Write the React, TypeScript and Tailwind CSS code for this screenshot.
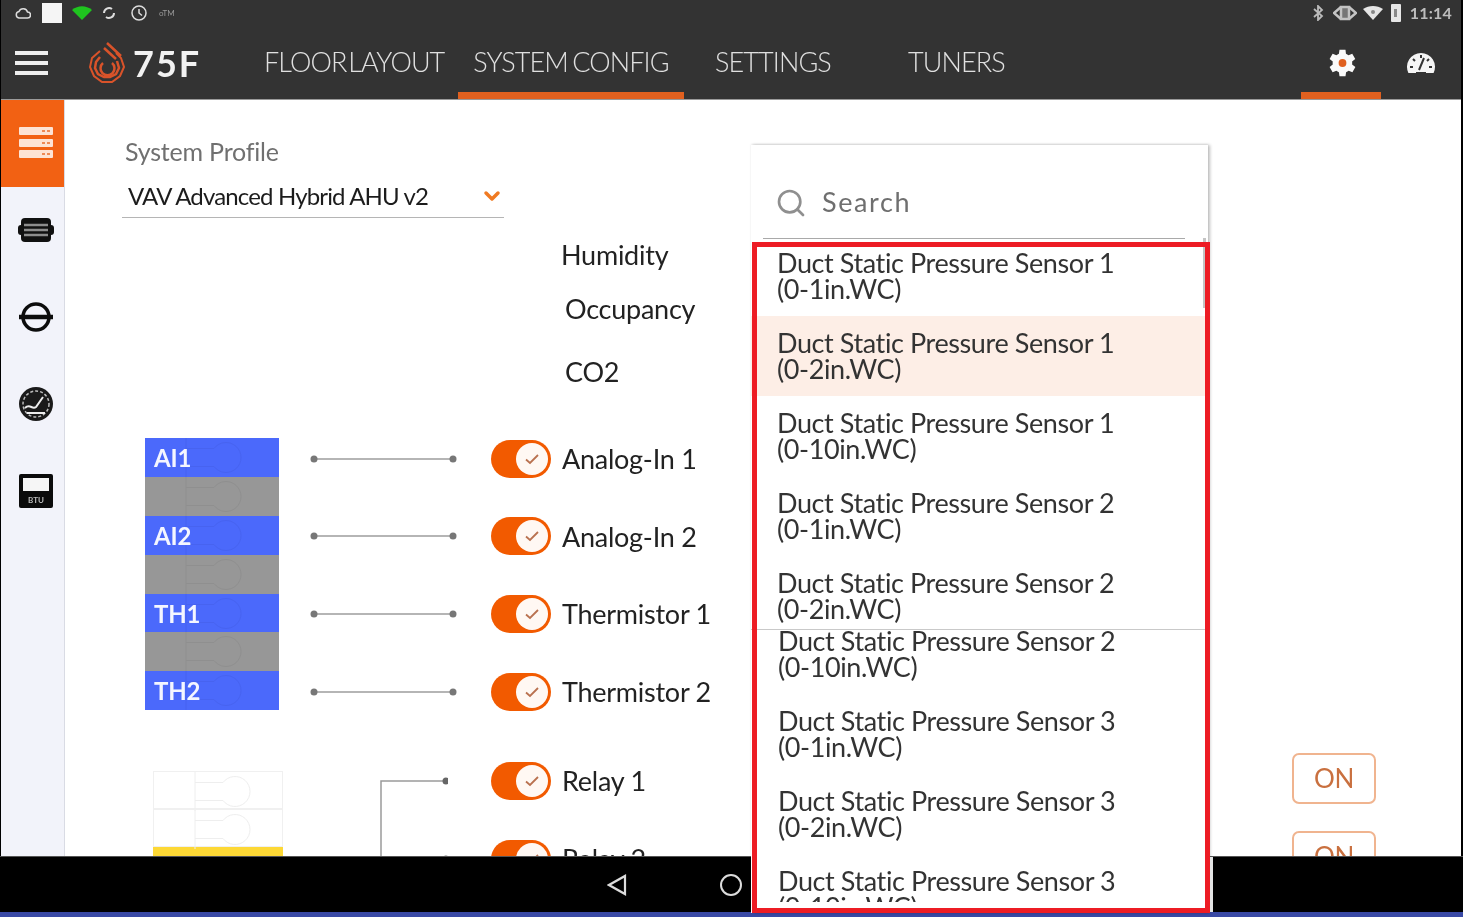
import type { ReactNode } from "react";
import { ChevronDown, Search } from "lucide-react";

const topSensors = [
  ["Duct Static Pressure Sensor 1", "(0-1in.WC)"],
  ["Duct Static Pressure Sensor 1", "(0-2in.WC)"],
  ["Duct Static Pressure Sensor 1", "(0-10in.WC)"],
  ["Duct Static Pressure Sensor 2", "(0-1in.WC)"],
  ["Duct Static Pressure Sensor 2", "(0-2in.WC)"],
];

const lowerSensors = [
  ["Duct Static Pressure Sensor 2", "(0-10in.WC)"],
  ["Duct Static Pressure Sensor 3", "(0-1in.WC)"],
  ["Duct Static Pressure Sensor 3", "(0-2in.WC)"],
  ["Duct Static Pressure Sensor 3", "(0-10in.WC)"],
];

const inputs = [
  { pin: "AI1", label: "Analog-In 1" },
  { pin: "AI2", label: "Analog-In 2" },
  { pin: "TH1", label: "Thermistor 1" },
  { pin: "TH2", label: "Thermistor 2" },
];

const Toggle = () => (
  <div className="flex h-[38px] w-[60px] shrink-0 items-center justify-end rounded-full bg-[#f25a00] pr-[3px]">
    <div className="flex h-[32px] w-[32px] items-center justify-center rounded-full bg-[#fff8f3]">
      <svg width="16" height="12" viewBox="0 0 16 12" fill="none" stroke="#b9714f" strokeWidth="1.8">
        <path d="M2 6.5 L6 10 L14 2" />
      </svg>
    </div>
  </div>
);

const Terminal = ({ stroke }: { stroke: string }) => (
  <svg className="absolute left-0 top-0" width="134" height="39" viewBox="0 0 134 39" fill="none" stroke={stroke} strokeWidth="1">
    <path d="M41 0 V39" />
    <path d="M41 10.5 H69 A15 15 0 1 1 69 28.5 H41" />
  </svg>
);

const PinCell = ({ label, gray }: { label?: string; gray?: boolean }) => (
  <div className={`relative flex h-[38.9px] items-center pl-[9px] ${gray ? "bg-[#979797]" : "bg-[#4b69fb]"}`}>
    <Terminal stroke={gray ? "#8f8f8f" : "#4763f0"} />
    {label && <span className="relative pt-[1px] text-[24px] font-bold leading-none tracking-[-0.2px] text-[#f4f6ff]">{label}</span>}
  </div>
);

const Wire = () => (
  <svg width="147" height="10" viewBox="0 0 147 10" className="shrink-0">
    <path d="M3 5 H144" stroke="#b5b5b5" strokeWidth="2" />
    <circle cx="4" cy="5" r="3.5" fill="#777" />
    <circle cx="143" cy="5" r="3.5" fill="#777" />
  </svg>
);

const SensorItem = ({ lines, active }: { lines: string[]; active?: boolean }) => (
  <div className={`flex h-[80px] shrink-0 flex-col justify-center pl-[26px] text-[27px] leading-[26px] tracking-[-0.4px] text-[#333333] ${active ? "bg-[#fdeee6]" : ""}`}>
    <div>{lines[0]}</div>
    <div>{lines[1]}</div>
  </div>
);

const Logo = () => (
  <svg width="36" height="42" viewBox="0 0 36 42" fill="none" stroke="#d9532a">
    <path d="M11 9 L3 16 L1 25 L5 34 L13 40 L23 40 L31 34 L35 25 L32 16 L27 11" strokeWidth="2" />
    <path d="M11 15 L7 20 L6 26 L9 32 L15 35 L21 35 L27 32 L30 26 L28 19" strokeWidth="2.5" />
    <path d="M14 21 A7 7 0 1 0 23 21" strokeWidth="2.5" />
    <path d="M15 6 L27 17 M18 1 L32 14" strokeWidth="2.5" />
  </svg>
);

const SidebarTile = ({ active, children }: { active?: boolean; children: ReactNode }) => (
  <div className={`flex h-[87px] items-center justify-center pb-[2px] pl-[6px] ${active ? "bg-[#f26113]" : ""}`}>{children}</div>
);

const App = () => {
  return (
    <div className="relative flex h-[917px] w-[1463px] flex-col overflow-hidden bg-black font-[Lato,sans-serif]">
      <div className="flex min-h-0 flex-1 flex-col blur-[0.75px]">
        {/* Header */}
        <header className="ml-[1px] mr-[2px] h-[100px] shrink-0 border-b border-[#9a9a9a] bg-[#333333] text-white">
          <div className="flex h-[28px] items-center pb-[2px] pl-[14px] pr-[9px]">
            <svg width="16" height="12" viewBox="0 0 16 12" fill="none" stroke="#ddd" strokeWidth="1.5">
              <path d="M4 11 H12.5 A3 3 0 0 0 12.5 5 A4.5 4.5 0 0 0 4 4.5 A3.3 3.3 0 0 0 4 11 Z" />
            </svg>
            <div className="ml-[11px] h-[20px] w-[20px] bg-[#f5f5f5]" />
            <svg className="ml-[10px]" width="20" height="14" viewBox="0 0 20 14">
              <path d="M0 4 C6 -1 14 -1 20 4 L10 14 Z" fill="#1fc41f" />
            </svg>
            <svg className="ml-[10px]" width="14" height="14" viewBox="0 0 14 14" fill="none" stroke="#ddd" strokeWidth="2">
              <path d="M2 7 A5 5 0 0 1 10 3 M12 7 A5 5 0 0 1 4 11" />
            </svg>
            <svg className="ml-[15px]" width="16" height="16" viewBox="0 0 16 16" fill="none" stroke="#ddd" strokeWidth="1.5">
              <circle cx="8" cy="8" r="7" />
              <path d="M8 4 V8 L11 10.5" />
            </svg>
            <span className="ml-[12px] text-[8px] leading-none text-[#999]">oTM</span>
            <div className="ml-auto flex items-center">
              <svg width="12" height="16" viewBox="0 0 12 16" fill="none" stroke="#bbb" strokeWidth="1.8">
                <path d="M2 4 L10 11 L6 15 V1 L10 5 L2 12" />
              </svg>
              <svg className="ml-[9px]" width="24" height="16" viewBox="0 0 24 16" fill="none" stroke="#c4c4c4" strokeWidth="2.5">
                <path d="M8 2 H16 V14 H8 Z" fill="#777" />
                <path d="M8 2 L1 8 L8 14 M16 2 L23 8 L16 14" />
              </svg>
              <svg className="ml-[6px]" width="20" height="14" viewBox="0 0 20 14">
                <path d="M0 3 C6 -1 14 -1 20 3 L10 14 Z" fill="#e6e6e6" />
                <circle cx="10" cy="6" r="2" fill="#888" />
              </svg>
              <div className="ml-[8px] flex h-[18px] w-[10px] items-center justify-center rounded-[1px] bg-[#e6e6e6]">
                <div className="h-[8px] w-[3px] bg-[#888]" />
              </div>
              <span className="ml-[9px] text-[16px] font-bold leading-none tracking-[0.2px] text-[#bdbdbd]">11:14</span>
            </div>
          </div>
          <nav className="flex h-[71px] items-stretch pl-[14px] text-[27px] font-light tracking-[-0.9px] text-[#e0e0e0]">
            <div className="flex w-[33px] flex-col justify-center gap-[6px] pb-[2px]">
              <div className="h-[4px] bg-[#eeeeee]" />
              <div className="h-[4px] bg-[#eeeeee]" />
              <div className="h-[4px] bg-[#eeeeee]" />
            </div>
            <div className="ml-[41px] flex items-center pb-[1px]">
              <Logo />
            </div>
            <div className="ml-[8px] flex w-[67px] items-center pb-[1px] text-[36px] font-bold leading-none tracking-[2px] text-[#f2f2f2]">
              75F
            </div>
            <div className="ml-[64px] flex w-[180px] items-center whitespace-nowrap pb-[2px] [word-spacing:-4.5px]">FLOOR LAYOUT</div>
            <div className="ml-[14px] flex w-[226px] items-center justify-center whitespace-nowrap border-b-[7px] border-[#e0601f] pt-[5px] [word-spacing:-2px]">
              SYSTEM CONFIG
            </div>
            <div className="ml-[31px] flex w-[117px] items-center whitespace-nowrap pb-[2px]">SETTINGS</div>
            <div className="ml-[76px] flex w-[97px] items-center whitespace-nowrap pb-[2px]">TUNERS</div>
            <div className="ml-auto flex w-[80px] items-center justify-center border-b-[7px] border-[#e0601f] pt-[5px]">
              <svg width="36" height="36" viewBox="0 0 24 24">
                <path
                  fill="#fafafa"
                  d="M19.4 13a7.5 7.5 0 0 0 0-2l2.1-1.6-2-3.5-2.5 1a7.5 7.5 0 0 0-1.7-1L15 3.2h-4l-.4 2.7a7.5 7.5 0 0 0-1.7 1l-2.5-1-2 3.500L6.500 11a7.500 7.500 0 0 0 0 2l-2.100 1.600 2 3.500 2.500-1a7.500 7.500 0 0 0 1.700 1l.4 2.700h4l.4-2.700a7.500 7.500 0 0 0 1.700-1l2.500 1 2-3.500z"
                />
                <circle cx="13" cy="12" r="2.600" fill="#e0601f" />
              </svg>
            </div>
            <div className="flex w-[80px] items-center justify-center pb-[2px]">
              <svg width="30" height="22" viewBox="0 0 30 22">
                <path d="M2.400 21 A14 14 0 1 1 27.600 21 Z" fill="#f5f5f5" />
                <path d="M15 3 V6 M7 7 L9 9 M23 7 L21 9 M4 15 H7 M26 15 H23 M13 18 L18 6 M10 21 H20" stroke="#333" strokeWidth="2" fill="none" />
              </svg>
            </div>
          </nav>
        </header>

        {/* Body */}
        <div className="ml-[1px] mr-[2px] flex h-[756px] shrink-0 overflow-hidden bg-white">
          <aside className="w-[64px] shrink-0 border-r border-[#d9dbe4] bg-[#f2f3fa]">
            <SidebarTile active>
              <svg width="36" height="32" viewBox="0 0 36 32">
                <rect x="1" y="0" width="34" height="8" rx="1" fill="#fde3d4" />
                <rect x="1" y="12" width="34" height="8" rx="1" fill="#fde3d4" />
                <rect x="1" y="23" width="34" height="8" rx="1" fill="#fde3d4" />
                <path d="M24 4 H32 M24 16 H32 M24 27 H32" stroke="#ee8a55" strokeWidth="2" strokeDasharray="3 2" />
              </svg>
            </SidebarTile>
            <SidebarTile>
              <svg width="36" height="26" viewBox="0 0 36 26">
                <rect x="3" y="1" width="30" height="24" rx="4" fill="#111" />
                <rect x="0" y="8" width="36" height="10" rx="3" fill="#111" />
                <path d="M6 8 H30 M6 13 H30 M6 18 H30" stroke="#8d8d8d" strokeWidth="2.500" />
              </svg>
            </SidebarTile>
            <SidebarTile>
              <svg width="36" height="30" viewBox="0 0 36 30" fill="none" stroke="#0c0c0c">
                <circle cx="18" cy="15" r="13" strokeWidth="3.500" />
                <path d="M1 15 H35" strokeWidth="4.500" />
              </svg>
            </SidebarTile>
            <SidebarTile>
              <svg width="36" height="36" viewBox="0 0 36 36">
                <circle cx="18" cy="18" r="17" fill="#1a1a1a" />
                <circle cx="18" cy="18" r="13" fill="none" stroke="#bdbdbd" strokeWidth="1.500" strokeDasharray="3 2" />
                <path d="M7 22 C12 17 14 24 18 21 L25 11 M9 27 H27" stroke="#eee" strokeWidth="2" fill="none" />
              </svg>
            </SidebarTile>
            <SidebarTile>
              <svg width="36" height="36" viewBox="0 0 36 36">
                <rect x="1" y="1" width="34" height="34" rx="2" fill="#0b0b0b" />
                <rect x="5" y="5" width="26" height="13" fill="#f6f6f6" />
                <text x="18" y="30" textAnchor="middle" fontSize="8" fontWeight="700" fill="#bdbdbd">
                  BTU
                </text>
              </svg>
            </SidebarTile>
          </aside>

          <main className="relative min-w-0 flex-1 text-[27px] tracking-[-0.25px] text-[#222222]">
            <div className="ml-[57px] w-[382px] pt-[36px]">
              <div className="pl-[3px] text-[25px] leading-[30px] tracking-[-0.2px] text-[#707070]">System Profile</div>
              <div className="mt-[6px] flex h-[46px] w-[382px] items-center justify-between border-b border-[#b5b5b5] pl-[6px]">
                <span className="pt-[3px] text-[24px] tracking-[-0.85px] text-[#1c1c1c]">VAV Advanced Hybrid AHU v2</span>
                <ChevronDown size={24} strokeWidth={3.5} className="mt-[3px] text-[#f07a22]" />
              </div>
            </div>

            <div className="mt-[19px] flex flex-col pl-[496px] leading-[36px]">
              <div>Humidity</div>
              <div className="ml-[4px] mt-[18px]">Occupancy</div>
              <div className="ml-[4px] mt-[27px]">CO2</div>
            </div>

            {/* Inputs */}
            <div className="mt-[30px] flex pl-[80px]">
              <div className="mt-[18px] w-[134px] shrink-0 self-start">
                <PinCell label="AI1" />
                <PinCell gray />
                <PinCell label="AI2" />
                <PinCell gray />
                <PinCell label="TH1" />
                <PinCell gray />
                <PinCell label="TH2" />
              </div>
              <div className="ml-[31px]">
                {inputs.map((input) => (
                  <div key={input.pin} className="flex h-[77.6px] items-center">
                    <Wire />
                    <div className="ml-[34px]">
                      <Toggle />
                    </div>
                    <span className="ml-[11px] whitespace-nowrap pt-[1px]">{input.label}</span>
                  </div>
                ))}
              </div>
            </div>

            {/* Relays */}
            <div className="mt-[12px] flex pl-[88px]">
              <div className="mt-[29px] w-[130px] shrink-0 self-start">
                {[0, 1].map((n) => (
                  <div key={n} className="relative h-[38px] border border-[#f0f0f0]">
                    <Terminal stroke="#eeeeee" />
                  </div>
                ))}
                <div className="h-[38px] bg-[#fdd835]" />
              </div>
              <div className="ml-[97px] shrink-0">
                <svg width="68" height="156" viewBox="0 0 68 156" fill="none" className="mt-[29px]">
                  <path d="M1 156 V10 H66" stroke="#9a9a9a" strokeWidth="1.500" />
                  <circle cx="66" cy="10" r="3.500" fill="#666" />
                  <circle cx="66" cy="88" r="3.500" fill="#666" />
                </svg>
              </div>
              <div className="ml-[43px] shrink-0">
                <div className="flex h-[78px] items-center">
                  <Toggle />
                  <span className="ml-[11px]">Relay 1</span>
                </div>
                <div className="flex h-[78px] items-center">
                  <Toggle />
                  <span className="ml-[11px]">Relay 2</span>
                </div>
              </div>
              <div className="ml-auto mr-[85px] mt-[11px] flex w-[84px] flex-col gap-[27px] text-[#c9703f]">
                <div className="flex h-[51px] items-center justify-center rounded-[7px] border-2 border-[#f0b48f] text-[26px]">ON</div>
                <div className="flex h-[51px] items-center justify-center rounded-[7px] border-2 border-[#f0b48f] text-[26px]">ON</div>
              </div>
            </div>
          </main>
        </div>

        {/* Android nav bar */}
        <div className="flex h-[56px] shrink-0 items-center border-t border-[#555] bg-black">
          <svg className="ml-[607px]" width="20" height="22" viewBox="0 0 20 22" fill="none" stroke="#dcdcdc" strokeWidth="2.200">
            <path d="M18 2 V20 L2 11 Z" />
          </svg>
          <div className="ml-[93px] h-[22px] w-[22px] rounded-full border-[2.500px] border-[#dcdcdc]" />
        </div>
        <div className="h-[5px] shrink-0 bg-[#3949a5]" />
      </div>

      {/* Sensor dropdown, floats over the page */}
      <div className="absolute left-[751px] top-[145px] flex h-[768px] w-[457px] flex-col bg-white shadow-[2px_0_3px_rgba(0,0,0,0.25),0_-1px_2px_rgba(0,0,0,0.08)] blur-[0.75px]">
        <div className="mx-[12px] flex h-[94px] w-[422px] shrink-0 items-center border-b border-[#a9a9a9] pl-[12px] pt-[22px]">
          <Search size={32} strokeWidth={2} className="text-[#8f8f8f]" />
          <span className="ml-[15px] text-[27px] tracking-[1.600px] text-[#6f6f6f]">Search</span>
        </div>
        <div className="mt-[7px] h-[384px] shrink-0 overflow-hidden border-b border-[#c9c9c9]">
          <div className="-mt-[10px] flex flex-col">
            {topSensors.map((s, i) => (
              <SensorItem key={i} lines={s} active={i === 1} />
            ))}
          </div>
        </div>
        <div className="h-[272px] shrink-0 overflow-hidden">
          <div className="-mt-[16px] ml-[1px] flex flex-col">
            {lowerSensors.map((s, i) => (
              <SensorItem key={i} lines={s} />
            ))}
          </div>
        </div>
        <div className="absolute left-[452px] top-[93px] h-[70px] w-[3px] bg-[#c4c4c4]" />
      </div>
      <div className="absolute left-[1209px] top-[857px] h-[55px] w-[4px] bg-[#e4e4e4]" />

      {/* Red highlight */}
      <div className="absolute left-[752px] top-[242px] h-[671px] w-[458px] border-[5px] border-[#ed1c24]" />
    </div>
  );
};

export default App;
